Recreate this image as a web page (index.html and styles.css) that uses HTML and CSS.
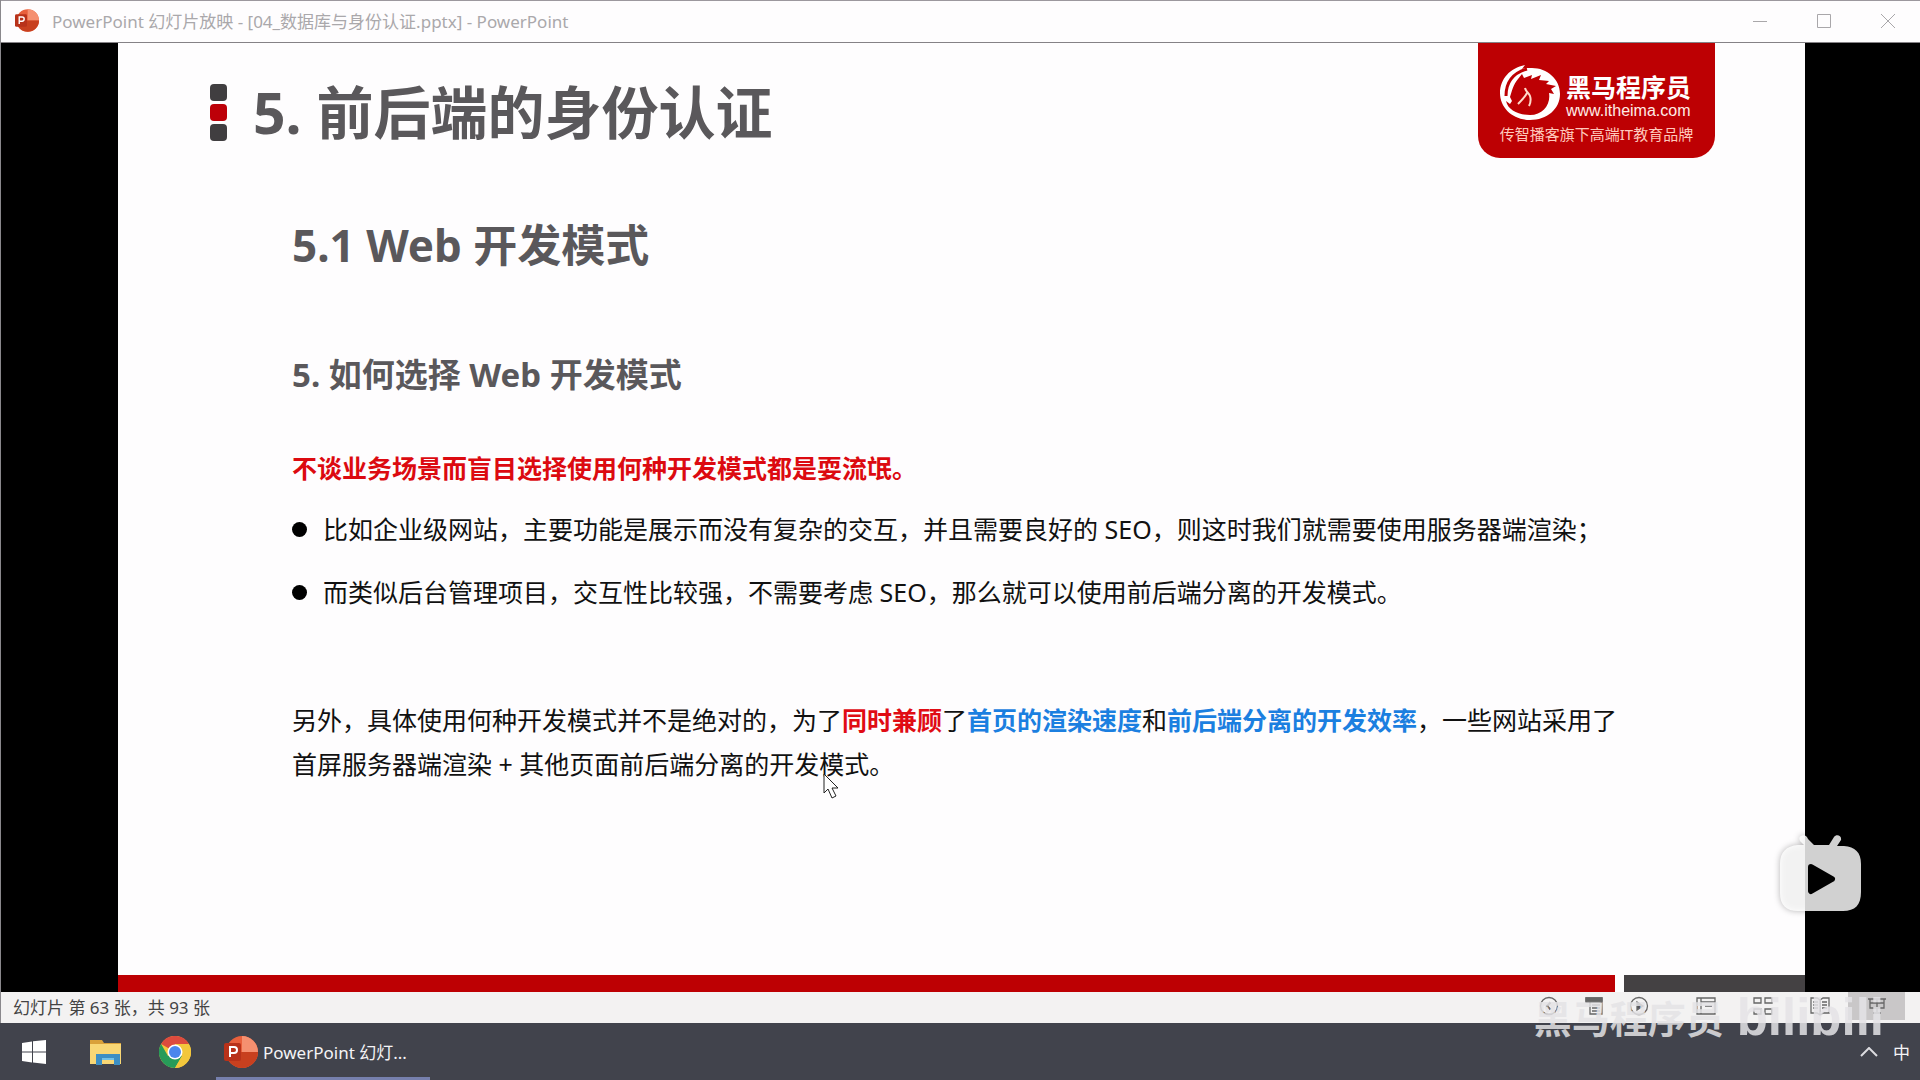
FILE: index.html
```html
<!DOCTYPE html>
<html lang="zh-CN">
<head>
<meta charset="utf-8">
<title>PowerPoint 幻灯片放映</title>
<link rel="stylesheet" href="styles.css">
</head>
<body>
<div class="window">
  <header class="titlebar">
    <svg class="app-icon" viewBox="0 0 34 32"><circle cx="18" cy="16" r="16" fill="#e8603c"/><path d="M18 0a16 16 0 0 1 16 16H18z" fill="#f59070"/><path d="M2 16h32a16 16 0 0 1-32 0z" fill="#c8401f"/><rect y="7" width="17" height="18" rx="2" fill="#b8321a"/><path d="M6 21V11h4a3 3 0 0 1 0 6H6" fill="none" stroke="#fff" stroke-width="2"/></svg>
    <span class="window-title">PowerPoint 幻灯片放映 - [04_数据库与身份认证.pptx] - PowerPoint</span>
    <div class="window-controls">
      <button aria-label="最小化"><svg viewBox="0 0 14 14"><path d="M0 7.5h14"/></svg></button>
      <button aria-label="最大化"><svg viewBox="0 0 14 14"><path d="M.5.5h13v13H.5z"/></svg></button>
      <button aria-label="关闭"><svg viewBox="0 0 14 14"><path d="M0 0l14 14M14 0L0 14"/></svg></button>
    </div>
  </header>

  <main class="stage">
    <article class="slide">
      <div class="slide-head">
        <div class="marks"><i></i><i class="red"></i><i></i></div>
        <h1>5. 前后端的身份认证</h1>
        <div class="brand">
          <div class="brand-row">
            <svg class="horse" viewBox="0 0 60 56">
              <path fill="#fff" d="M25 0C10 3 0 14 0 28c0 15 13 27 30 27s30-11 30-26S47 3 32 3c-4 0-7 0-10 1z"/>
              <path fill="#bd0003" d="M18 14l4-5 2 4 8-3-1 4 10-4-2 5 10 1-3 3 10 2-5 3 3 5-5-1c2 11-6 22-19 22C18 50 8 45 6 36l4 3 2-3-2-4c2-6 3-12 8-18z"/>
              <path fill="none" stroke="#bd0003" stroke-width="3" d="M27 4C13 8 6 17 6 31"/>
              <path d="M25 23c1 4 4 5 5 8s1 6-1 10M27 28c-2 4-5 7-9 11" fill="none" stroke="#ffd9c9" stroke-width="2"/>
            </svg>
            <div class="brand-names"><strong>黑马程序员</strong><a href="#">www.itheima.com</a></div>
          </div>
          <p>传智播客旗下高端IT教育品牌</p>
        </div>
      </div>
      <div class="slide-body">
        <h2>5.1 Web 开发模式</h2>
        <h3>5. 如何选择 Web 开发模式</h3>
        <p class="lead">不谈业务场景而盲目选择使用何种开发模式都是耍流氓。</p>
        <ul class="points">
          <li>比如企业级网站，主要功能是展示而没有复杂的交互，并且需要良好的 SEO，则这时我们就需要使用服务器端渲染；</li>
          <li>而类似后台管理项目，交互性比较强，不需要考虑 SEO，那么就可以使用前后端分离的开发模式。</li>
        </ul>
        <p class="note">另外，具体使用何种开发模式并不是绝对的，为了<b class="hot">同时兼顾</b>了<b class="cool">首页的渲染速度</b>和<b class="cool">前后端分离的开发效率</b>，一些网站采用了<br>首屏服务器端渲染 + 其他页面前后端分离的开发模式。</p>
      </div>
      <div class="slide-foot"><span class="bar-red"></span><span class="bar-grey"></span></div>
    </article>
  </main>

  <footer class="statusbar">
    <span>幻灯片 第 63 张，共 93 张</span>
    <div class="tools">
      <button aria-label="上一张"><svg viewBox="0 0 20 20"><circle cx="10" cy="10" r="8.5"/><path d="M11.500 6.500L8 10l3.500 3.500" stroke-width="2"/></svg></button>
      <button aria-label="菜单"><svg viewBox="0 0 20 20"><path d="M2 2h16v16H6V6H2zM6 6h12M8 9h8M8 12h8M8 15h8"/><path d="M2 2h16v3H2z" fill="#666"/></svg></button>
      <button aria-label="下一张"><svg viewBox="0 0 20 20"><circle cx="10" cy="10" r="8.500"/><path d="M8 6l6 4-6 4z" fill="#555"/></svg></button>
    </div>
    <div class="tools views">
      <button aria-label="普通视图"><svg viewBox="0 0 20 20"><path d="M1 2h18v16H1zM5 2v16M5 6h14M9 10h7"/></svg></button>
      <button aria-label="浏览视图"><svg viewBox="0 0 20 20"><path d="M1 2h7v5H1zM12 2h7v5h-7zM1 13h7v5H1zM12 13h7v5h-7z"/></svg></button>
      <button aria-label="阅读视图"><svg viewBox="0 0 20 20"><path d="M10 4L7 2H1v15h6l3 2 3-2h6V2h-6zM10 4v15M3 6h5M3 9h5M3 12h5M12 6h5M12 9h5M12 12h5"/></svg></button>
      <button class="active" aria-label="幻灯片放映"><svg viewBox="0 0 20 20"><path d="M1 3h18M3 3v9h14V3M10 3v13M6 17h8M3 7h14"/></svg></button>
    </div>
  </footer>
</div>

<nav class="taskbar">
  <button class="task start" aria-label="开始"><svg viewBox="0 0 24 24"><path fill="#fff" d="M0 3l10-1.500v10H0zM11 1.300L24 0v11.500H11zM0 12.500h10v10L0 21zM11 12.500h13V24l-13-1.500z"/></svg></button>
  <button class="task folder" aria-label="文件资源管理器"><svg viewBox="0 0 31 26"><path fill="#d9a13a" d="M0 1h12l2 3h17v4H0z"/><path fill="#f8d775" d="M0 5h31v20H0z"/><path fill="#3d8fc4" d="M6 15h24v11h-6v-5H12v5H6z"/><path fill="#71c1e8" d="M12 19h12v2H12z"/></svg></button>
  <button class="task chrome" aria-label="Chrome"><svg viewBox="0 0 32 32"><circle cx="16" cy="16" r="16" fill="#f3c73c"/><path fill="#dd4b3e" d="M16 16L2.100 8A16 16 0 0 1 29.900 8H16z"/><path fill="#279b59" d="M2.100 8A16 16 0 0 0 16 32l7-12-7-4-7 4z"/><path fill="#f3c73c" d="M29.900 8A16 16 0 0 1 16 32l7-12 0-8-7-4z"/><circle cx="16" cy="16" r="7.500" fill="#fff"/><circle cx="16" cy="16" r="6" fill="#4b86ed"/></svg></button>
  <button class="task running"><svg viewBox="0 0 34 32"><circle cx="18" cy="16" r="16" fill="#e8603c"/><path d="M18 0a16 16 0 0 1 16 16H18z" fill="#f59070"/><path d="M2 16h32a16 16 0 0 1-32 0z" fill="#c8401f"/><rect y="7" width="17" height="18" rx="2" fill="#b8321a"/><path d="M6 21V11h4a3 3 0 0 1 0 6H6" fill="none" stroke="#fff" stroke-width="2"/></svg><span>PowerPoint 幻灯...</span></button>
  <div class="tray">
    <button aria-label="显示隐藏的图标"><svg viewBox="0 0 18 10"><path d="M1 9l8-8 8 8"/></svg></button>
    <span>中</span>
  </div>
</nav>

<svg class="player" viewBox="0 0 82 76">
  <path fill="#fff" fill-opacity=".82" d="M21 1c3-2 6 0 7 3l6 6h15l5-8c2-3 8-2 7 3l-4 6h7c11 1 17 6 17 18v28c0 13-6 19-18 19H18C6 76 0 70 0 58V29C0 17 6 11 18 10h6l-4-4c-1-2-1-4 1-5z"/>
  <path d="M31 32l21 12-21 12z" stroke="#000" stroke-width="6" stroke-linejoin="round"/>
</svg>
<div class="watermark"><span class="author">黑马程序员</span><span class="site">bilibili</span></div>
<svg class="pointer" viewBox="0 0 16 26"><path fill="#fff" stroke="#222" d="M1 1v19l4-4 4 9 4-2-4-8h6z"/></svg>
</body>
</html>
```

FILE: styles.css
```css
* { box-sizing: border-box; }
body {
  margin: 0;
  min-height: 100vh;
  display: flex;
  flex-direction: column;
  position: relative;
  overflow-x: hidden;
  background: #41434c;
  font-family: "Noto Sans", "Noto Sans CJK SC", sans-serif;
  font-size: 17px;
}
h1, h2, h3, p, ul { margin: 0; padding: 0; }
button {
  display: flex;
  align-items: center;
  justify-content: center;
  padding: 0;
  border: 0;
  background: none;
  color: inherit;
  font: inherit;
}
.window {
  flex: 1;
  display: flex;
  flex-direction: column;
  border-left: 1px solid #8a888c;
  background: #fefdfe;
}

.titlebar {
  display: flex;
  align-items: center;
  height: 43px;
  padding: 0 0 2px 14px;
  border-top: 1px solid #9c989e;
  border-bottom: 1px solid #858286;
  color: #aaa8ab;
}
.app-icon { width: 24px; height: 23px; }
.window-title { margin-left: 13px; white-space: nowrap; }
.window-controls { display: flex; margin-left: auto; align-self: stretch; }
.window-controls button { width: 64px; }
.window-controls svg { width: 14px; height: 14px; fill: none; stroke: #a9a7aa; }

.stage { flex: 1; display: flex; padding: 0 115px 0 117px; background: #000; }
.slide { flex: 1; display: flex; flex-direction: column; background: #fefdfe; }
.slide-head { display: flex; align-items: flex-start; padding: 0 90px 0 92px; }
.marks { display: flex; flex-direction: column; gap: 3px; margin-top: 41px; }
.marks i { width: 17px; height: 17px; border-radius: 4px; background: #403e40; }
.marks .red { background: #bd0008; }
h1 { margin: 34px 0 0 26px; font-size: 57px; line-height: 70px; color: #5a585b; }
.brand {
  margin-left: auto;
  width: 237px;
  height: 115px;
  padding: 22px 22px 0;
  border-radius: 0 0 22px 22px;
  background: #bd0003;
  color: #fff;
}
.brand-row { display: flex; gap: 6px; }
.horse { flex: none; width: 60px; height: 56px; }
.brand-names { display: flex; flex-direction: column; padding-top: 8px; white-space: nowrap; }
.brand-names strong { font-size: 25px; line-height: 28px; }
.brand-names a {
  color: #ffece6;
  font-family: "Liberation Sans", Arial, sans-serif;
  font-size: 16px;
  line-height: 20px;
  text-decoration: none;
}
.brand p {
  display: flex;
  justify-content: center;
  font-size: 15px;
  line-height: 26px;
  color: #ffc9bd;
  white-space: nowrap;
}

.slide-body { padding: 57px 0 0 174px; font-size: 25px; color: #111; }
h2 { font-size: 44px; line-height: 60px; color: #5a585b; }
h3 { margin-top: 80px; font-size: 33px; line-height: 40px; color: #5a585b; }
.lead { margin-top: 53px; line-height: 40px; font-weight: 700; color: #dc0a10; }
.points { display: grid; gap: 19px; margin-top: 19px; list-style: none; }
.points li { display: flex; align-items: center; gap: 16px; line-height: 44px; }
.points li::before { content: ""; flex: none; width: 15px; height: 15px; border-radius: 50%; background: #000; }
.note { margin-top: 84px; line-height: 44px; }
.hot { color: #e00c14; }
.cool { color: #1b7fe0; }
.slide-foot { display: flex; gap: 9px; height: 17px; margin-top: auto; }
.bar-red { flex: 1497; background: #bd0003; }
.bar-grey { flex: 181; background: #444143; }

.statusbar {
  display: flex;
  align-items: center;
  height: 31px;
  padding: 0 15px 3px 12px;
  background: #f3f2f2;
  color: #444;
}
.tools { display: flex; align-self: stretch; margin-left: auto; }
.tools button { width: 45px; }
.tools svg { width: 20px; height: 20px; fill: none; stroke: #666; stroke-width: 1.3; }
.views { margin-left: 16px; }
.views button { width: 57px; }
.views .active { background: #c9c7c8; }

.taskbar { display: flex; height: 57px; color: #f4f4f6; }
.task { width: 70px; }
.start { width: 68px; }
.start svg { width: 24px; height: 24px; }
.folder { width: 74px; }
.folder svg { width: 31px; height: 26px; }
.chrome { width: 66px; }
.chrome svg { width: 32px; height: 32px; }
.running {
  width: 214px;
  margin-left: 8px;
  padding: 3px 8px 0;
  justify-content: flex-start;
  gap: 5px;
  border-bottom: 3px solid #7680ad;
  white-space: nowrap;
}
.running svg { width: 34px; height: 32px; }
.tray { display: flex; align-items: center; gap: 15px; margin-left: auto; padding-right: 10px; }
.tray svg { width: 18px; height: 10px; fill: none; stroke: #dcdce0; stroke-width: 2; }

.player { position: absolute; right: 58px; bottom: 169px; width: 82px; height: 76px; filter: drop-shadow(0 0 3px rgba(0, 0, 0, .35)); }
.pointer { position: absolute; left: 823px; top: 773px; width: 16px; height: 26px; }
.watermark {
  position: absolute;
  right: 36px;
  bottom: 27px;
  display: flex;
  align-items: flex-end;
  gap: 13px;
  color: rgba(228, 227, 230, .85);
  font-weight: 700;
  pointer-events: none;
}
.author { font-size: 38px; line-height: 70px; }
.site { font-family: "Liberation Sans", Arial, sans-serif; font-size: 51px; line-height: 70px; }
```
